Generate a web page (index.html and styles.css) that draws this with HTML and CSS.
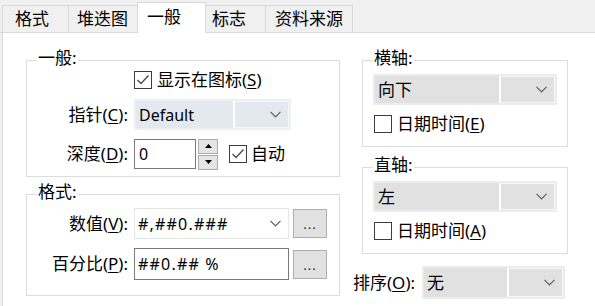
FILE: index.html
```html
<!DOCTYPE html>
<html lang="zh-CN">
<head>
<meta charset="utf-8">
<link rel="stylesheet" href="styles.css">
</head>
<body>
<div class="tabs">
  <div class="tab t1">格式</div>
  <div class="tab t2">堆迭图</div>
  <div class="tab t3 active">一般</div>
  <div class="tab t4">标志</div>
  <div class="tab t5">资料来源</div>
</div>
<div class="panel">
  <div class="col-left">
    <div class="group g-general">
      <span class="legend">一般:</span>
      <div class="row r-show">
        <span class="check"><span class="cb"><svg width="16" height="16" viewBox="0 0 16 16"><polyline points="2.5,8 6,11.5 13.5,3.5" fill="none" stroke="#4a4a4a" stroke-width="1.3"/></svg></span><span class="ctext">显示在图标(<u>S</u>)</span></span>
      </div>
      <div class="row r-ptr">
        <span class="lbl">指针(<u>C</u>):</span>
        <div class="combo blue w-ptr"><span class="val">Default</span><span class="arrow"><svg width="11" height="7" viewBox="0 0 11 7"><polyline points="0.5,0.8 5.5,5.8 10.5,0.8" fill="none" stroke="#5f5f5f" stroke-width="1.2"/></svg></span></div>
      </div>
      <div class="row r-depth">
        <span class="lbl">深度(<u>D</u>):</span>
        <div class="input w-depth">0</div>
        <div class="spin">
          <span class="sb"><svg width="7" height="4" viewBox="0 0 7 4"><polygon points="0,4 7,4 3.5,0" fill="#000"/></svg></span>
          <span class="sb"><svg width="7" height="4" viewBox="0 0 7 4"><polygon points="0,0 7,0 3.5,4" fill="#000"/></svg></span>
        </div>
        <span class="check auto"><span class="cb"><svg width="16" height="16" viewBox="0 0 16 16"><polyline points="2.5,8 6,11.5 13.5,3.5" fill="none" stroke="#4a4a4a" stroke-width="1.3"/></svg></span><span class="ctext">自动</span></span>
      </div>
    </div>
    <div class="group g-format">
      <span class="legend">格式:</span>
      <div class="row r-num">
        <span class="lbl">数值(<u>V</u>):</span>
        <div class="combo white w-fmt"><span class="val mono">#,##0.###</span><span class="arrow plain"><svg width="11" height="7" viewBox="0 0 11 7"><polyline points="0.5,0.8 5.5,5.8 10.5,0.8" fill="none" stroke="#5f5f5f" stroke-width="1.2"/></svg></span></div>
        <div class="btn">...</div>
      </div>
      <div class="row r-pct">
        <span class="lbl">百分比(<u>P</u>):</span>
        <div class="input w-fmt mono">##0.## %</div>
        <div class="btn">...</div>
      </div>
    </div>
  </div>
  <div class="col-right">
    <div class="group g-axis">
      <span class="legend">横轴:</span>
      <div class="row r-sel">
        <div class="combo grey w-axis"><span class="val">向下</span><span class="arrow"><svg width="11" height="7" viewBox="0 0 11 7"><polyline points="0.5,0.8 5.5,5.8 10.5,0.8" fill="none" stroke="#5f5f5f" stroke-width="1.2"/></svg></span></div>
      </div>
      <div class="row r-cb">
        <span class="check"><span class="cb"></span><span class="ctext">日期时间(<u>E</u>)</span></span>
      </div>
    </div>
    <div class="group g-axis g-axis2">
      <span class="legend">直轴:</span>
      <div class="row r-sel">
        <div class="combo grey w-axis"><span class="val">左</span><span class="arrow"><svg width="11" height="7" viewBox="0 0 11 7"><polyline points="0.5,0.8 5.5,5.8 10.5,0.8" fill="none" stroke="#5f5f5f" stroke-width="1.2"/></svg></span></div>
      </div>
      <div class="row r-cb">
        <span class="check"><span class="cb"></span><span class="ctext">日期时间(<u>A</u>)</span></span>
      </div>
    </div>
    <div class="row r-sort">
      <span class="lbl sort-lbl">排序(<u>O</u>):</span>
      <div class="combo grey w-sort"><span class="val">无</span><span class="arrow"><svg width="11" height="7" viewBox="0 0 11 7"><polyline points="0.5,0.8 5.5,5.8 10.5,0.8" fill="none" stroke="#5f5f5f" stroke-width="1.2"/></svg></span></div>
    </div>
  </div>
</div>
</body>
</html>
```

FILE: styles.css
```css
html, body {
  margin: 0;
  padding: 0;
}
body {
  width: 595px;
  height: 306px;
  overflow: hidden;
  background: #f0f0f0;
  font-family: "Noto Sans", "Noto Sans CJK SC", sans-serif;
  font-size: 17px;
  line-height: 20px;
  color: #000;
}
u {
  text-decoration: underline;
  text-underline-offset: 2px;
  text-decoration-thickness: 1px;
}

/* tabs */
.tabs {
  display: flex;
  align-items: flex-end;
  height: 32px;
  padding-left: 2px;
  border-bottom: 1px solid #d9d9d9;
}
.tab {
  box-sizing: border-box;
  height: 27px;
  border: 1px solid #d9d9d9;
  border-bottom: none;
  margin-right: -1px;
  background: #f0f0f0;
  display: flex;
  align-items: center;
  white-space: nowrap;
}
.tab.active {
  height: 31px;
  margin-bottom: -1px;
  background: #fff;
  padding-bottom: 2px;
  position: relative;
}
.t1 { width: 67px; padding-left: 12px; }
.t2 { width: 70px; padding-left: 8px; }
.t3 { width: 69px; padding-left: 9px; }
.t4 { width: 61px; padding-left: 6px; }
.t5 { width: 88px; padding-left: 9px; }

/* panel */
.panel {
  display: flex;
  margin-left: 2px;
  height: 273px;
  background: #fff;
  border-left: 1px solid #d9d9d9;
  padding: 27px 0 0 23px;
  box-sizing: border-box;
}
.col-left {
  width: 314px;
  display: flex;
  flex-direction: column;
  gap: 17px;
}
.col-right {
  width: 215px;
  margin-left: 13px;
  display: flex;
  flex-direction: column;
}

.group {
  position: relative;
  box-sizing: border-box;
  border: 1px solid #dcdcdc;
  display: flex;
  flex-direction: column;
}
.legend {
  position: absolute;
  top: -14px;
  left: 10px;
  background: #fff;
  padding: 0 1px;
  line-height: 22px;
}

.row {
  display: flex;
  align-items: center;
}
.lbl {
  width: 107px;
  box-sizing: border-box;
  padding-right: 6px;
  text-align: right;
  white-space: nowrap;
}

.g-general {
  height: 117px;
  padding-top: 9px;
  gap: 9px;
}
.r-show { height: 20px; padding-left: 107px; }
.r-ptr { height: 31px; }
.r-depth { height: 30px; }

.g-format {
  height: 102px;
  padding-top: 13px;
  gap: 9px;
}
.r-num { height: 31px; }
.r-pct { height: 32px; }

.g-axis {
  margin-left: 9px;
  width: 206px;
  height: 87px;
  padding: 13px 0 0 10px;
  gap: 9px;
}
.g-axis2 { margin-top: 20px; }
.r-sel { height: 31px; }
.r-cb { height: 20px; padding-left: 1px; }

.r-sort {
  margin-top: 12px;
  height: 33px;
}
.sort-lbl {
  width: 69px;
  text-align: left;
  padding-right: 0;
}

/* checkbox */
.check {
  display: inline-flex;
  align-items: center;
  gap: 5px;
  white-space: nowrap;
}
.ctext { white-space: nowrap; }
.cb {
  box-sizing: border-box;
  width: 18px;
  height: 18px;
  border: 1px solid #3c3c3c;
  background: #fff;
  display: inline-flex;
}
.check.auto { margin-left: 11px; gap: 4px; }

/* combos */
.combo {
  box-sizing: border-box;
  height: 100%;
  display: flex;
  border: 2px solid #ececec;
  background: #e1e1e1;
}
.combo .val {
  flex: 1;
  display: flex;
  align-items: center;
  padding-left: 3px;
  white-space: nowrap;
}
.combo .arrow {
  box-sizing: border-box;
  width: 56px;
  border: 1px solid #f7f7f7;
  border-left: 2px solid #fff;
  display: flex;
  align-items: center;
  justify-content: flex-end;
  padding-right: 7px;
}
.combo.blue {
  background: #e4e9ef;
  border-color: #edf0f4;
}
.combo.blue .arrow { border-color: #f5f7fa; border-left-color: #fff; }
.combo.white {
  background: #fff;
  border: 1px solid #e6e6e6;
}
.combo .arrow.plain {
  border: none;
  width: 30px;
  padding-right: 7px;
}
.w-ptr { width: 157px; font-size: 16px; }
.w-axis { width: 184px; }
.w-sort { width: 143px; }
.w-fmt { width: 155px; }

.mono {
  font-size: 16px;
  letter-spacing: 1.2px;
}

/* inputs */
.input {
  box-sizing: border-box;
  height: 100%;
  border: 1px solid #7a7a7a;
  background: #fff;
  display: flex;
  align-items: center;
  padding-left: 4px;
  font-size: 16px;
  white-space: nowrap;
}
.w-depth { width: 62px; }
.r-pct .input { padding-left: 3px; }

.spin {
  margin-left: 2px;
  width: 20px;
  height: 31px;
  display: flex;
  flex-direction: column;
  gap: 1px;
}
.sb {
  box-sizing: border-box;
  flex: 1;
  background: #e5e5e5;
  border: 1px solid #adadad;
  display: flex;
  align-items: center;
  justify-content: center;
}

.btn {
  box-sizing: border-box;
  margin-left: 4px;
  width: 34px;
  height: 29px;
  background: #e1e1e1;
  border: 1px solid #adadad;
  display: flex;
  align-items: flex-end;
  justify-content: center;
  font-size: 13px;
  line-height: 18px;
  letter-spacing: 1px;
  color: #222;
  padding-bottom: 4px;
}
```
